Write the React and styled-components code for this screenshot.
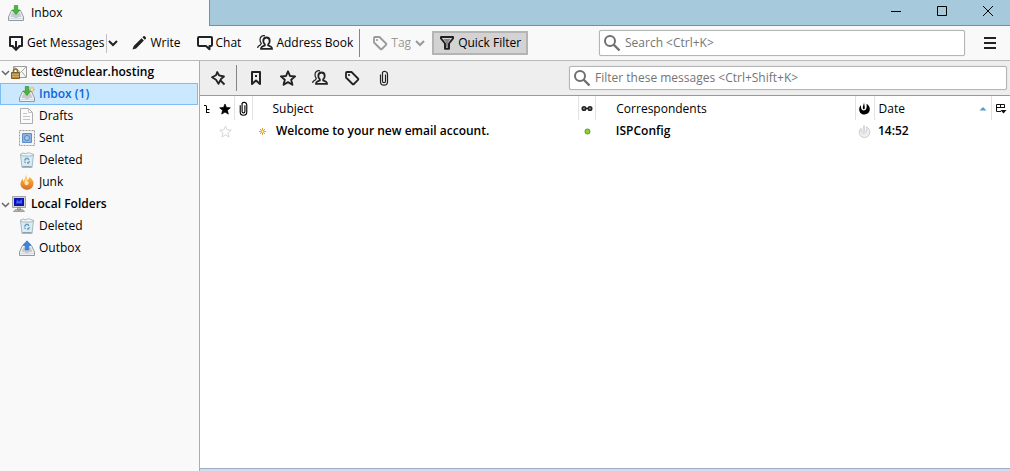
import {useState} from 'react';
import styled, {createGlobalStyle} from 'styled-components';

const GlobalStyle = createGlobalStyle`
	:root {
		--text: #000;
		--muted: #757575;
		--disabled: #999;
		--icon: #222;
		--line: #bababa;
		--chrome: #f9f9f9;
		--title-bar: #a6cadb;
		--title-line: #748f9e;
	}

	* {
		box-sizing: border-box;
	}

	body {
		margin: 0;
		color: var(--text);
		font: 12px/16px 'Open Sans', 'Noto Sans', sans-serif;
	}

	button, input {
		color: inherit;
		font: inherit;
	}
`;

const Window = styled.div`
	display: flex;
	flex-direction: column;
	min-height: 100vh;
	background: var(--chrome);
`;

const TitleBar = styled.header`
	display: flex;
	height: 26px;
	background: var(--title-bar);
`;

const Tab = styled.button`
	display: flex;
	align-items: center;
	gap: 7px;
	width: 210px;
	padding: 0 8px 1px;
	border: 0;
	border-right: 1px solid var(--title-line);
	background: var(--chrome);
`;

const WindowButtons = styled.div`
	display: flex;
	flex: 1;
	justify-content: flex-end;
	border-bottom: 1px solid var(--title-line);
`;

const WindowButton = styled.button`
	display: flex;
	align-items: center;
	justify-content: center;
	width: 46px;
	padding: 0 0 3px 2px;
	border: 0;
	background: none;
`;

const Toolbar = styled.div`
	display: flex;
	align-items: center;
	height: 35px;
	padding: 0 12px 0 8px;
	border-bottom: 1px solid var(--line);
`;

const ToolButton = styled.button`
	display: flex;
	align-items: center;
	gap: 3px;
	height: 24px;
	margin-right: ${({$gap}) => $gap || 0}px;
	padding: 0;
	border: 0;
	background: none;
	color: ${({disabled}) => disabled ? 'var(--disabled)' : 'inherit'};
	white-space: nowrap;
`;

const ToggleButton = styled(ToolButton)`
	padding: 0 5px;
	border: 2px solid ${({$pressed}) => $pressed ? '#b4b4b4' : 'transparent'};
	background: ${({$pressed}) => $pressed ? '#d3d3d3' : 'none'};
`;

const Separator = styled.span`
	width: 1px;
	height: ${({$height}) => $height}px;
	margin: 0 ${({$gap}) => $gap || 0}px 0 2px;
	background: ${({$light}) => $light ? '#c0c0c0' : '#858585'};
`;

const SearchBox = styled.label`
	display: flex;
	flex: 0 1 ${({$width}) => $width}px;
	align-items: center;
	gap: 4px;
	height: ${({$height}) => $height}px;
	margin-left: auto;
	padding: 0 4px 0 3px;
	border: 1px solid #b5b5b5;
	border-radius: 2px;
	background: #fff;
	box-shadow: 0 0 1px #bbb;
`;

const SearchInput = styled.input`
	flex: 1;
	min-width: 0;
	padding: 0;
	border: 0;
	outline: 0;
	background: none;

	&::placeholder {
		color: var(--muted);
		opacity: 1;
	}
`;

const MenuButton = styled.button`
	display: flex;
	margin-left: 17px;
	padding: 0;
	border: 0;
	background: none;
`;

const Main = styled.div`
	display: flex;
	flex: 1;
`;

const Sidebar = styled.nav`
	flex: none;
	width: 200px;
	border-right: 1px solid #a5adb8;
`;

const FolderList = styled.ul`
	margin: 0;
	padding: 0;
	list-style: none;
`;

const AccountButton = styled.button`
	display: flex;
	align-items: center;
	width: 100%;
	height: 22px;
	padding: 0 0 0 1px;
	border: 0;
	background: none;
	font-weight: 600;
`;

const AccountIcon = styled.span`
	display: flex;
	margin: 0 4px 0 1px;
`;

const FolderLink = styled.a`
	display: flex;
	align-items: center;
	gap: 4px;
	height: 22px;
	margin-right: 1px;
	padding-left: 18px;
	border: 1px solid ${({$selected}) => $selected ? '#7dbdf5' : 'transparent'};
	background: ${({$selected}) => $selected ? '#cce8ff' : 'none'};
	color: ${({$selected}) => $selected ? '#0a66d8' : 'inherit'};
	font-weight: ${({$selected}) => $selected ? 600 : 400};
	text-decoration: none;
`;

const Content = styled.main`
	display: flex;
	flex: 1;
	flex-direction: column;
	min-width: 0;
	background: #fff;
`;

const FilterBar = styled.div`
	display: flex;
	align-items: center;
	height: 35px;
	padding: 0 3px 0 2px;
	border-bottom: 1px solid #9a9a9a;
	background: #eee;
`;

const FilterButton = styled.button`
	display: flex;
	align-items: center;
	justify-content: center;
	width: 32px;
	height: 24px;
	padding: 0;
	border: 0;
	background: none;
`;

const MessageTable = styled.table`
	width: 100%;
	border-collapse: collapse;
	table-layout: fixed;
	text-align: left;
`;

const HeadCell = styled.th`
	width: ${({$width}) => $width};
	height: 24px;
	padding: 1px 0 0 ${({$indent}) => $indent || 0}px;
	border-right: ${({$divided}) => $divided ? '1px solid #e2e2e2' : '0'};
	font-weight: 400;
	white-space: nowrap;
`;

const Cell = styled.td`
	height: 22px;
	padding: 0 0 0 ${({$indent}) => $indent || 0}px;
	font-weight: 600;
	white-space: nowrap;
`;

const CellContent = styled.span`
	display: flex;
	align-items: center;
	justify-content: ${({$align}) => $align || 'center'};
	gap: ${({$gap}) => $gap || 0}px;
`;

const StatusLine = styled.footer`
	height: 3px;
	margin-top: auto;
	border-top: 1px solid #9fadbf;
	background: #cbdff0;
`;

const Icon = ({size = 16, color = 'var(--icon)', width = 2, children}) => (
	<svg
		width={size}
		height={size}
		viewBox={`0 0 ${size} ${size}`}
		fill='none'
		stroke={color}
		strokeWidth={width}
		aria-hidden='true'
	>
		{children}
	</svg>
);

const GetIcon = () => (
	<Icon>
		<path d='M5.500 11H2V2h12v9h-3.500' strokeLinejoin='round' />
		<path d='M8 6v8' />
		<path d='m4 10.800 4 4 4-4' />
	</Icon>
);

const PenIcon = () => (
	<Icon>
		<path d='m1.500 14.500 1.200-3.600L10.500 3.200l2.400 2.400-7.800 7.800zM11.400 2.300l1-1q.7-.6 1.400 0l1 1q.6.7 0 1.400l-1 1z' fill='var(--icon)' stroke='none' />
	</Icon>
);

const ChatIcon = () => (
	<Icon>
		<path d='M2 2h12q1 0 1 1v7q0 1-1 1h-1.500v3.200L9 11H2q-1 0-1-1V3q0-1 1-1z' strokeLinejoin='round' />
	</Icon>
);

const PeopleIcon = () => (
	<Icon width={1.800}>
		<path d='M9.500 2.500c2.300 0 3.200 1.400 3.200 3.400 0 1.600-.7 2.700-1.500 3.500v1l2.800 1.300q1 .6 1 2.100H4q0-1.500 1-2.100l2.800-1.300v-1C7 8.600 6.300 7.500 6.300 5.900c0-2 .9-3.400 3.200-3.400z' />
		<path d='M8 .8C5 .2 3 2 3 4.700c0 1.700.6 2.900 1.300 3.700L3.500 9.800 1.600 11q-.9.700-.9 2' strokeWidth='1.200' />
	</Icon>
);

const TagIcon = ({color}) => (
	<Icon color={color} width={1.800}>
		<path d='M2 3q0-1 1-1h4.500L14 8.500q.7.700 0 1.400L9.900 14q-.7.700-1.400 0L2 7.500z' strokeLinejoin='round' />
		<circle cx='5' cy='5' r='1.100' fill={color || 'var(--icon)'} stroke='none' />
	</Icon>
);

const FunnelIcon = () => (
	<Icon>
		<path d='M2 2h12v1.500L10 8.500v5.200H6V8.500L2 3.500z' strokeLinejoin='round' />
		<path d='M4.500 4h7L9 7.500v5H7v-5z' fill='#888' stroke='none' />
	</Icon>
);

const ChevronIcon = ({color}) => (
	<Icon size={12} color={color}>
		<path d='m2 4 4 4 4-4' />
	</Icon>
);

const SearchIcon = () => (
	<Icon size={18} color='#707070'>
		<circle cx='7' cy='7' r='5' />
		<path d='m10.500 10.500 6 6' strokeWidth='2.400' />
	</Icon>
);

const PinIcon = () => (
	<Icon width={1.800}>
		<path d='M7.200 2 9 5.300l5 1.200-2.800 2.300-2.700 5L6 9.700 2 7.300l4-2z' strokeLinejoin='round' />
		<path d='m10 10 4.500 4.500' />
	</Icon>
);

const BookmarkIcon = () => (
	<Icon>
		<path d='M4 2h8v12l-4-3.500L4 14z' strokeLinejoin='round' />
		<path d='M7 6h2' />
	</Icon>
);

const StarIcon = ({size = 16, color = 'var(--icon)', fill = 'none', width}) => (
	<svg width={size} height={size} viewBox='0 0 16 16' aria-hidden='true'>
		<path
			d='m8 1.300 2 4.700 5.100.4-3.900 3.400 1.200 5L8 12.100l-4.400 2.700 1.200-5L.9 6.400 6 6z'
			fill={fill}
			stroke={color}
			strokeWidth={width || 1.900}
			strokeLinejoin='round'
		/>
	</svg>
);

const ClipIcon = ({size = 16, color = 'var(--icon)'}) => (
	<svg width={size} height={size} viewBox='0 0 16 16' fill='none' stroke={color} strokeWidth='1.200' aria-hidden='true'>
		<path d='M4.500 4.500v7.200a3.500 3.500 0 0 0 7 0V4.200a2.800 2.800 0 0 0-5.400-1M6.500 3v8.200a1.500 1.500 0 0 0 3 0V4.500' />
	</svg>
);

const ThreadIcon = () => (
	<Icon size={10} color='#000' width={1}>
		<path d='M1 1.500h2.500M3.500 2v7M4 5.500h2.500M4 8.500h2.500' />
	</Icon>
);

const GlassesIcon = () => (
	<Icon size={12} color='#222' width={1.500}>
		<circle cx='3' cy='5.500' r='1.800' fill='#888' />
		<circle cx='9' cy='5.500' r='1.800' fill='#888' />
		<path d='M4.500 5.500h3' />
	</Icon>
);

const FlameIcon = ({size = 13, color = '#000', stroke = 'none'}) => (
	<svg width={size} height={size} viewBox='0 0 13 13' aria-hidden='true'>
		<path
			d='M6 .5C5.800 3 4.700 3.800 4.800 6c.1 1.600 1.800 1.700 2 .2.100-1.500-.5-3.500-.8-5.700zM8.500 1.800c2.300 1.400 3.300 3.200 3.300 5.300 0 3.300-2.300 5.400-5.300 5.400S1.200 10.400 1.200 7.400c0-1.700.7-3.200 1.800-4.100-.1 1.900.1 3.200.8 4.200.9 1.300 3.300 1.300 4.200-.2.800-1.400.9-3.400.5-5.500z'
			fill={color}
			stroke={stroke}
			strokeWidth='.8'
		/>
	</svg>
);

const PickerIcon = () => (
	<Icon size={12} color='#111' width={1}>
		<path d='M9.500 5V1.500h-8v7H6M1.500 4.500h8M5.500 1.500v3' />
		<path d='M5.500 7h6l-3 3.500z' fill='#111' stroke='none' />
	</Icon>
);

const TrayIcon = ({out, fresh}) => (
	<Icon width={1}>
		<path d='M3.500 5.500h9l3 6.500v3.500H.5V12z' fill='#eef1f3' stroke='#929a9f' />
		<path d='M4.200 7.500h7.600l1.700 4.500h-3.200l-1 1.500H6.700l-1-1.500H2.500z' fill='#c5ccd1' stroke='none' />
		<path d='M1 13.500h14' stroke='#d7dcdf' />
		{out
			? <path d='M8 .8 12 5H9.800v5H6.200V5H4z' fill='#4185d7' stroke='#2c6cc0' strokeWidth='.6' />
			: <path d='M6.300.5h3.400V5H12L8 9.500 4 5h2.300z' fill='#45b83c' stroke='#2c8928' strokeWidth='.6' />}
		{fresh &&
		<>
			<path d='M13 .5v6M10 3.500h6M11 1.500l4 4M15 1.500l-4 4' stroke='#e59a32' strokeWidth='.8' />
			<circle cx='13' cy='3.500' r='1.200' fill='#ffe9a0' stroke='none' />
		</>
		}
	</Icon>
);

const MailIcon = () => (
	<Icon width={1}>
		<path d='M2.500 2.500h13v11h-13z' fill='#f7f7f5' stroke='#9b9b97' />
		<path d='m3 3 6.500 5.500L15 3M15 13l-4-5' stroke='#a8a8a4' />
		<path d='M2.500 9V7a2 2 0 0 1 4 0v2' stroke='#866b32' strokeWidth='1.500' />
		<path d='M.5 8.500h8v6h-8z' fill='#b28a37' stroke='#80601e' />
		<path d='M1 10.500h7M1 12.500h7' stroke='#d0ae65' />
	</Icon>
);

const DraftIcon = () => (
	<Icon width={1}>
		<path d='M1.500.5h8l4 4v11h-12z' fill='#fafafa' stroke='#adadad' />
		<path d='M9.500.5v4h4M4 5.500h4M4 8.500h7M4 11.500h7' stroke='#c4c4c4' />
	</Icon>
);

const SentIcon = () => (
	<Icon width={1}>
		<path d='M.5.5h15v15H.5z' fill='#f5f5f5' stroke='#999' strokeDasharray='2 1' />
		<path d='M3.500 3.500h9v9h-9z' fill='#8db3e0' stroke='#5f8ec6' />
		<circle cx='8' cy='8' r='2.500' fill='#a9c9ed' stroke='#5585c0' />
	</Icon>
);

const TrashIcon = () => (
	<Icon width={1}>
		<path d='m1.500 2.500 1.500 13h10l1.500-13z' fill='#dcebf1' stroke='#a5b8c1' />
		<path d='M1 2.500 4 1l2.500.8L9.500.7l2.300.8 3.200 1-3 1.500H4z' fill='#f4f7f8' stroke='#a9b9c0' />
		<path d='M5.500 8.500 7 6.500h2l1 1.500M10.500 9l-1 2H8M6.500 11l-1-1.500' stroke='#5c9ecb' strokeWidth='1.300' />
		<path d='M3.500 14.500h9' stroke='#8fa3ad' />
	</Icon>
);

const JunkIcon = () => (
	<Icon width={1}>
		<defs>
			<linearGradient id='flame' x2='0' y2='1'>
				<stop stopColor='#f7cc6b' />
				<stop offset='.5' stopColor='#f39a30' />
				<stop offset='1' stopColor='#d56d28' />
			</linearGradient>
		</defs>
		<path d='M7 0c.2 2.500 1.200 3.800 1.200 6 1 .5 1.800-1 1.800-3 3 1.500 4.500 3.800 4.500 6.300 0 3.800-2.900 6.500-6.500 6.500S1.500 13.300 1.500 9.800C1.500 7.500 2.600 5.600 4 4.500c-.1 1.500 0 2.200.6 3C5.800 5.300 6.800 3 7 0z' fill='url(#flame)' stroke='none' />
		<path d='M7.300 2.500c-.3 2.500-2.300 4.500-1.800 7 .4 2 3.300 2.300 4 .2.500-1.600-.3-2.700-1.700-2.900C7.200 5.500 7.500 4 7.300 2.500z' fill='#ffe2ab' stroke='none' />
	</Icon>
);

const ComputerIcon = () => (
	<Icon width={1}>
		<path d='M1.500.5h13v11h-13z' fill='#d5d5cd' stroke='#a5a59d' />
		<path d='M3 2h10v8H3z' fill='#0a13b7' stroke='none' />
		<path d='m5 7.500 1-4 2 2 3-2.500v4.500z' fill='#4a60e1' stroke='none' />
		<path d='M6.500 11.500h3V14h-3zM4 13.800h8l1.500 1.700h-11z' fill='#c4c4bd' stroke='#85857e' strokeWidth='.7' />
	</Icon>
);

const accounts = [
	{
		name: 'test@nuclear.hosting',
		icon: <MailIcon />,
		folders: [
			{name: 'Inbox (1)', icon: <TrayIcon fresh />},
			{name: 'Drafts', icon: <DraftIcon />},
			{name: 'Sent', icon: <SentIcon />},
			{name: 'Deleted', icon: <TrashIcon />},
			{name: 'Junk', icon: <JunkIcon />},
		],
	},
	{
		name: 'Local Folders',
		icon: <ComputerIcon />,
		folders: [
			{name: 'Deleted', icon: <TrashIcon />},
			{name: 'Outbox', icon: <TrayIcon out />},
		],
	},
];

const filters = [
	{label: 'Unread', icon: <BookmarkIcon />},
	{label: 'Starred', icon: <StarIcon />},
	{label: 'Contact', icon: <PeopleIcon />},
	{label: 'Tags', icon: <TagIcon />},
	{label: 'Attachment', icon: <ClipIcon />},
];

const Account = ({account, selected, onSelect}) => {
	const [open, setOpen] = useState(true);

	return (
		<li>
			<AccountButton aria-expanded={open} onClick={() => setOpen(!open)}>
				<Icon size={9} color='#666' width={1.500}><path d='m1 3 3.500 3.500L8 3' /></Icon>
				<AccountIcon>{account.icon}</AccountIcon>
				{account.name}
			</AccountButton>
			{open &&
			<FolderList>
				{account.folders.map(folder => {
					const id = `${account.name}/${folder.name}`;

					return (
						<li key={id}>
							<FolderLink
								href={`#${id}`}
								$selected={selected === id}
								onClick={() => onSelect(id)}
							>
								{folder.icon}
								{folder.name}
							</FolderLink>
						</li>
					);
				})}
			</FolderList>
			}
		</li>
	);
}

const Messages = () => (
	<MessageTable>
		<thead>
			<tr>
				<HeadCell $width='16px' aria-label='Thread'>
					<CellContent><ThreadIcon /></CellContent>
				</HeadCell>
				<HeadCell $width='18px' $divided aria-label='Starred'>
					<CellContent><StarIcon size={12} color='#000' fill='#000' width={1} /></CellContent>
				</HeadCell>
				<HeadCell $width='18px' $divided aria-label='Attachment'>
					<CellContent><ClipIcon size={15} color='#000' /></CellContent>
				</HeadCell>
				<HeadCell $indent={20} $divided>Subject</HeadCell>
				<HeadCell $width='17px' $divided aria-label='Read'>
					<CellContent><GlassesIcon /></CellContent>
				</HeadCell>
				<HeadCell $width='32%' $indent={20} $divided>Correspondents</HeadCell>
				<HeadCell $width='19px' $divided aria-label='Junk'>
					<CellContent><FlameIcon /></CellContent>
				</HeadCell>
				<HeadCell $width='117px' $indent={4} $divided aria-sort='ascending'>
					<CellContent $align='space-between'>
						Date
						<Icon size={16}><path d='m4.500 9.500 3.500-3.500 3.500 3.500z' fill='#5a9bc7' stroke='none' /></Icon>
					</CellContent>
				</HeadCell>
				<HeadCell $width='19px' aria-label='Columns'>
					<CellContent><PickerIcon /></CellContent>
				</HeadCell>
			</tr>
		</thead>
		<tbody>
			<tr>
				<Cell />
				<Cell>
					<CellContent><StarIcon size={13} color='#ccc' width={1} /></CellContent>
				</Cell>
				<Cell />
				<Cell $indent={6}>
					<CellContent $align='flex-start' $gap={9}>
						<Icon size={9} color='#e2a02c' width={1}>
							<path d='M4.500 1v7M1 4.500h7M2 2l5 5M7 2 2 7' />
							<circle cx='4.500' cy='4.500' r='1.500' fill='#fff3c8' />
						</Icon>
						Welcome to your new email account.
					</CellContent>
				</Cell>
				<Cell>
					<CellContent>
						<Icon size={7} color='#5c9318' width={1}>
							<circle cx='3.500' cy='3.500' r='2.500' fill='#8fd035' />
						</Icon>
					</CellContent>
				</Cell>
				<Cell $indent={20}>ISPConfig</Cell>
				<Cell><CellContent><FlameIcon color='#eee' stroke='#c4c4c4' /></CellContent></Cell>
				<Cell $indent={4}>14:52</Cell>
				<Cell />
			</tr>
		</tbody>
	</MessageTable>
);

const App = () => {
	const [selected, setSelected] = useState('test@nuclear.hosting/Inbox (1)');
	const [filtering, setFiltering] = useState(true);

	return (
		<Window>
			<GlobalStyle />
			<TitleBar>
				<Tab><TrayIcon />Inbox</Tab>
				<WindowButtons>
					<WindowButton aria-label='Minimize'>
						<Icon size={10} color='#000' width={1}><path d='M0 5.500h10' /></Icon>
					</WindowButton>
					<WindowButton aria-label='Maximize'>
						<Icon size={10} color='#000' width={1}><path d='M.5.5h9v9h-9z' /></Icon>
					</WindowButton>
					<WindowButton aria-label='Close'>
						<Icon size={10} color='#000' width={1}><path d='m0 0 10 10M10 0 0 10' /></Icon>
					</WindowButton>
				</WindowButtons>
			</TitleBar>
			<Toolbar>
				<ToolButton><GetIcon />Get Messages</ToolButton>
				<Separator $height={19} $light />
				<ToolButton $gap={12} aria-label='Get messages for account'>
					<ChevronIcon />
				</ToolButton>
				<ToolButton $gap={16}><PenIcon />Write</ToolButton>
				<ToolButton $gap={16}><ChatIcon />Chat</ToolButton>
				<ToolButton $gap={4}><PeopleIcon />Address Book</ToolButton>
				<Separator $height={28} $gap={12} />
				<ToolButton disabled $gap={6}>
					<TagIcon color='#999' />
					Tag
					<ChevronIcon color='#999' />
				</ToolButton>
				<ToggleButton
					$pressed={filtering}
					aria-pressed={filtering}
					onClick={() => setFiltering(!filtering)}
				>
					<FunnelIcon />Quick Filter
				</ToggleButton>
				<SearchBox $width={366} $height={26}>
					<SearchIcon />
					<SearchInput aria-label='Search' placeholder='Search <Ctrl+K>' />
				</SearchBox>
				<MenuButton aria-label='Menu'>
					<Icon><path d='M2 3h12M2 8h12M2 13h12' /></Icon>
				</MenuButton>
			</Toolbar>
			<Main>
				<Sidebar>
					<FolderList>
						{accounts.map(account => (
							<Account
								key={account.name}
								account={account}
								selected={selected}
								onSelect={setSelected}
							/>
						))}
					</FolderList>
				</Sidebar>
				<Content>
					{filtering &&
					<FilterBar>
						<FilterButton aria-label='Keep filters'><PinIcon /></FilterButton>
						<Separator $height={26} $gap={3} />
						{filters.map(({label, icon}) => (
							<FilterButton key={label} aria-label={label}>{icon}</FilterButton>
						))}
						<SearchBox $width={438} $height={24}>
							<SearchIcon />
							<SearchInput
								aria-label='Filter messages'
								placeholder='Filter these messages <Ctrl+Shift+K>'
							/>
						</SearchBox>
					</FilterBar>
					}
					<Messages />
					<StatusLine />
				</Content>
			</Main>
		</Window>
	);
}

export default App;
